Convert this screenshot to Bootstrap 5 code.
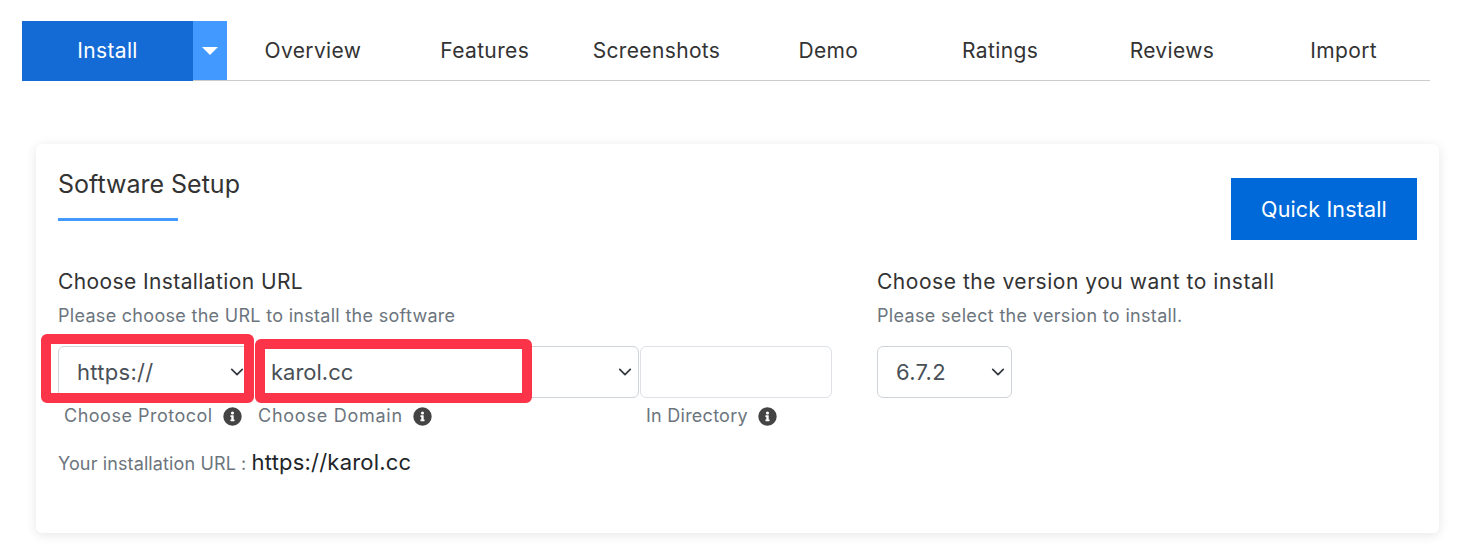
<!DOCTYPE html>
<html lang="en">
<head>
<meta charset="utf-8">
<title>Software Setup</title>
<link href="https://cdn.jsdelivr.net/npm/bootstrap@5.3.0/dist/css/bootstrap.min.css" rel="stylesheet">
<style>
body{background:#fff;font-family:"Inter","Noto Sans",sans-serif;color:#333;padding:21px 35px 22px 22px}
.tabbar{height:60px;border-bottom:1px solid #ccc}
.tab-main{width:171px;height:60px;background:#156bd6;color:#fff;font-size:21px;letter-spacing:.35px}
.tab-main:hover{color:#fff}
.tab-caret{width:34px;height:59px;background:#4299ff}
.tab-caret i{border-left:8px solid transparent;border-right:8px solid transparent;border-top:8px solid #fff}
.tab-item{width:171.8px;color:#333;font-size:21px;letter-spacing:.35px}
.setup-box{margin:63px -9px 0 14px;height:389px;border-radius:6px;box-shadow:0 2px 12px rgba(0,0,0,.1);padding:22px 22px 0 22px;background:#fff}
.setup-title{font-size:25px;font-weight:400;line-height:36px;margin:0;color:#333}
.title-rule{width:120px;height:3px;background:#4299ff;margin-top:16px}
.quick-btn{width:186px;height:62px;margin-top:12px;background:#0069d9;color:#fff;font-size:21.5px;border-radius:0;border:0;letter-spacing:.15px}
.setup-cols{margin-top:27px}
.col-left{width:819px}
.sec-title{font-size:21px;line-height:30px;font-weight:400;margin:0;color:#333;letter-spacing:.4px}
.sec-sub{font-size:18px;line-height:26px;color:#6c757d;margin:6px 0 17px;letter-spacing:.3px}
.col-right .sec-title{letter-spacing:.53px}
.col-right .sec-sub{letter-spacing:.33px}
.pick{height:52px;font-size:22px;color:#495057;border:1px solid #ced4da;border-radius:6px;padding:0 30px 0 18px;background-position:right 4px center;background-size:18px 14px;box-shadow:none;letter-spacing:.3px}
.pick-proto{width:193px}
.pick-dom{width:384px;margin-left:4px;padding-left:15px;letter-spacing:0}
.pick-dir{width:192px;margin-left:1px;border-color:#dee2e6}
.pick-ver{width:135px}
.field-note{font-size:18px;color:#6c757d;line-height:26px;margin-top:5px}
.note-a{width:193px;padding-left:6px;gap:10px;letter-spacing:.5px}
.note-b{width:388px;padding-left:7px;gap:10px;letter-spacing:.75px}
.note-c{padding-left:7px;gap:10px;letter-spacing:.25px}
.info-ico{width:19px;height:19px;flex:none}
.url-line{font-size:18px;color:#6c757d;margin-top:18px;line-height:30px;letter-spacing:.12px}
.url-line b{font-weight:400;font-size:22px;color:#212529;letter-spacing:.2px}
.mark-zone{position:relative}
.hl{position:absolute;border:10px solid #fb3449;border-radius:6px;pointer-events:none}
.hl-a{left:-17px;top:-12px;width:213px;height:69px}
.hl-b{left:197px;top:-7px;width:277px;height:64px}
</style>
</head>
<body>
<nav class="tabbar d-flex">
  <a class="tab-main d-flex align-items-center justify-content-center text-decoration-none">Install</a>
  <span class="tab-caret d-flex align-items-center justify-content-center"><i class="d-block"></i></span>
  <a class="tab-item d-flex align-items-center justify-content-center text-decoration-none">Overview</a>
  <a class="tab-item d-flex align-items-center justify-content-center text-decoration-none">Features</a>
  <a class="tab-item d-flex align-items-center justify-content-center text-decoration-none">Screenshots</a>
  <a class="tab-item d-flex align-items-center justify-content-center text-decoration-none">Demo</a>
  <a class="tab-item d-flex align-items-center justify-content-center text-decoration-none">Ratings</a>
  <a class="tab-item d-flex align-items-center justify-content-center text-decoration-none">Reviews</a>
  <a class="tab-item d-flex align-items-center justify-content-center text-decoration-none">Import</a>
</nav>
<section class="setup-box">
  <div class="d-flex justify-content-between">
    <div>
      <h2 class="setup-title">Software Setup</h2>
      <div class="title-rule"></div>
    </div>
    <button class="btn quick-btn" type="button">Quick Install</button>
  </div>
  <div class="d-flex setup-cols">
    <div class="col-left">
      <h3 class="sec-title">Choose Installation URL</h3>
      <p class="sec-sub">Please choose the URL to install the software</p>
      <div class="mark-zone d-flex">
        <select class="form-select pick pick-proto"><option>https://</option></select>
        <select class="form-select pick pick-dom"><option>karol.cc</option></select>
        <input class="form-control pick pick-dir" type="text">
        <span class="hl hl-a"></span>
        <span class="hl hl-b"></span>
      </div>
      <div class="d-flex field-note">
        <span class="note-a d-flex align-items-center">Choose Protocol
          <svg class="info-ico" viewBox="0 0 512 512"><path fill="#444" d="M256 8a248 248 0 1 0 0 496 248 248 0 0 0 0-496zm0 110a42 42 0 1 1 0 84 42 42 0 0 1 0-84zm56 254c0 7-5 12-12 12h-88c-7 0-12-5-12-12v-24c0-7 5-12 12-12h12v-64h-12c-7 0-12-5-12-12v-24c0-7 5-12 12-12h64c7 0 12 5 12 12v100h12c7 0 12 5 12 12v24z"/></svg></span>
        <span class="note-b d-flex align-items-center">Choose Domain
          <svg class="info-ico" viewBox="0 0 512 512"><path fill="#444" d="M256 8a248 248 0 1 0 0 496 248 248 0 0 0 0-496zm0 110a42 42 0 1 1 0 84 42 42 0 0 1 0-84zm56 254c0 7-5 12-12 12h-88c-7 0-12-5-12-12v-24c0-7 5-12 12-12h12v-64h-12c-7 0-12-5-12-12v-24c0-7 5-12 12-12h64c7 0 12 5 12 12v100h12c7 0 12 5 12 12v24z"/></svg></span>
        <span class="note-c d-flex align-items-center">In Directory
          <svg class="info-ico" viewBox="0 0 512 512"><path fill="#444" d="M256 8a248 248 0 1 0 0 496 248 248 0 0 0 0-496zm0 110a42 42 0 1 1 0 84 42 42 0 0 1 0-84zm56 254c0 7-5 12-12 12h-88c-7 0-12-5-12-12v-24c0-7 5-12 12-12h12v-64h-12c-7 0-12-5-12-12v-24c0-7 5-12 12-12h64c7 0 12 5 12 12v100h12c7 0 12 5 12 12v24z"/></svg></span>
      </div>
      <p class="url-line">Your installation URL : <b>https://karol.cc</b></p>
    </div>
    <div class="col-right">
      <h3 class="sec-title">Choose the version you want to install</h3>
      <p class="sec-sub">Please select the version to install.</p>
      <select class="form-select pick pick-ver"><option>6.7.2</option></select>
    </div>
  </div>
</section>
</body>
</html>
